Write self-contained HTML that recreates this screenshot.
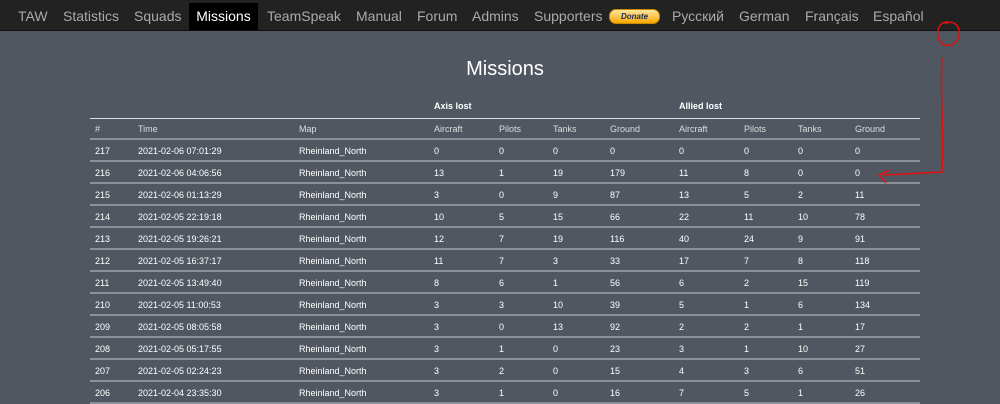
<!DOCTYPE html>
<html><head><style>
body{margin:0;width:1000px;height:401px;overflow:hidden;background:#505761;font-family:"Liberation Sans",Arial,sans-serif;color:#fff;position:relative}
.nav{height:30px;background:#222;border-bottom:1px solid #111;position:relative}
.nav span{position:absolute;top:8px;font-size:14px;color:#aaa}
.nav .act{background:#000;color:#fff;top:3px;height:27px;line-height:27px;left:189px;width:69px;text-align:center}
.don{position:absolute;left:609px;top:9px;width:49px;height:13px;border-radius:7px;background:linear-gradient(#ffe7a0,#f8a800);border:1px solid #c88a00;font-size:8px;font-style:italic;font-weight:bold;color:#1a2a5a;text-align:center;line-height:13px}
h1{position:absolute;left:0;width:1010px;text-align:center;top:58px;margin:0;font-size:20px;font-weight:normal}
.t{position:absolute;left:90px;width:830px;font-size:9px}
.r{position:absolute;left:0;width:830px;height:22px;border-bottom:2px solid #8a9098;box-sizing:border-box}
.r span{position:absolute;top:6px}
.g{color:#ddd}
</style></head><body>
<div class="nav">
<span style="left:18px">TAW</span><span style="left:63px">Statistics</span><span style="left:134px">Squads</span>
<span class="act">Missions</span>
<span style="left:267px">TeamSpeak</span><span style="left:356px">Manual</span><span style="left:417px">Forum</span><span style="left:472px">Admins</span><span style="left:534px">Supporters</span>
<div class="don">Donate</div>
<span style="left:672px">Русский</span><span style="left:739px">German</span><span style="left:805px">Français</span><span style="left:873px">Español</span>
</div>
<h1>Missions</h1>
<div class="t" style="top:96px">
<div style="position:absolute;left:344px;top:5px;font-weight:bold">Axis lost</div>
<div style="position:absolute;left:589px;top:5px;font-weight:bold">Allied lost</div>
<div style="position:absolute;left:0;top:22px;width:830px;height:1px;background:#ddd"></div>
</div>
<div class="t" id="tb" style="top:118px"></div>
<svg style="position:absolute;left:0;top:0" width="1000" height="401"><g fill="none" stroke="#e01010" stroke-width="1.5">
<path d="M948 22 C936 21 934 40 944 45 C956 48 962 36 958 27 C955 22 950 21 945 24"/>
<path d="M942 58 C940 90 944 130 942 172 L884 175 M890 170 L879 175 L886 183"/></g></svg>
<script>
var cols=[5,48,209,344,409,463,520,589,654,708,765];
var d=[["#","Time","Map","Aircraft","Pilots","Tanks","Ground","Aircraft","Pilots","Tanks","Ground"],
["217","2021-02-06 07:01:29","Rheinland_North",0,0,0,0,0,0,0,0],
["216","2021-02-06 04:06:56","Rheinland_North",13,1,19,179,11,8,0,0],
["215","2021-02-06 01:13:29","Rheinland_North",3,0,9,87,13,5,2,11],
["214","2021-02-05 22:19:18","Rheinland_North",10,5,15,66,22,11,10,78],
["213","2021-02-05 19:26:21","Rheinland_North",12,7,19,116,40,24,9,91],
["212","2021-02-05 16:37:17","Rheinland_North",11,7,3,33,17,7,8,118],
["211","2021-02-05 13:49:40","Rheinland_North",8,6,1,56,6,2,15,119],
["210","2021-02-05 11:00:53","Rheinland_North",3,3,10,39,5,1,6,134],
["209","2021-02-05 08:05:58","Rheinland_North",3,0,13,92,2,2,1,17],
["208","2021-02-05 05:17:55","Rheinland_North",3,1,0,23,3,1,10,27],
["207","2021-02-05 02:24:23","Rheinland_North",3,2,0,15,4,3,6,51],
["206","2021-02-04 23:35:30","Rheinland_North",3,1,0,16,7,5,1,26]];
var h="";d.forEach(function(r,i){h+='<div class="r'+(i==0?' g':'')+'" style="top:'+(i*22)+'px">';r.forEach(function(c,j){h+='<span style="left:'+cols[j]+'px">'+c+'</span>'});h+='</div>'});
document.getElementById('tb').innerHTML=h;
</script>
</body></html>
